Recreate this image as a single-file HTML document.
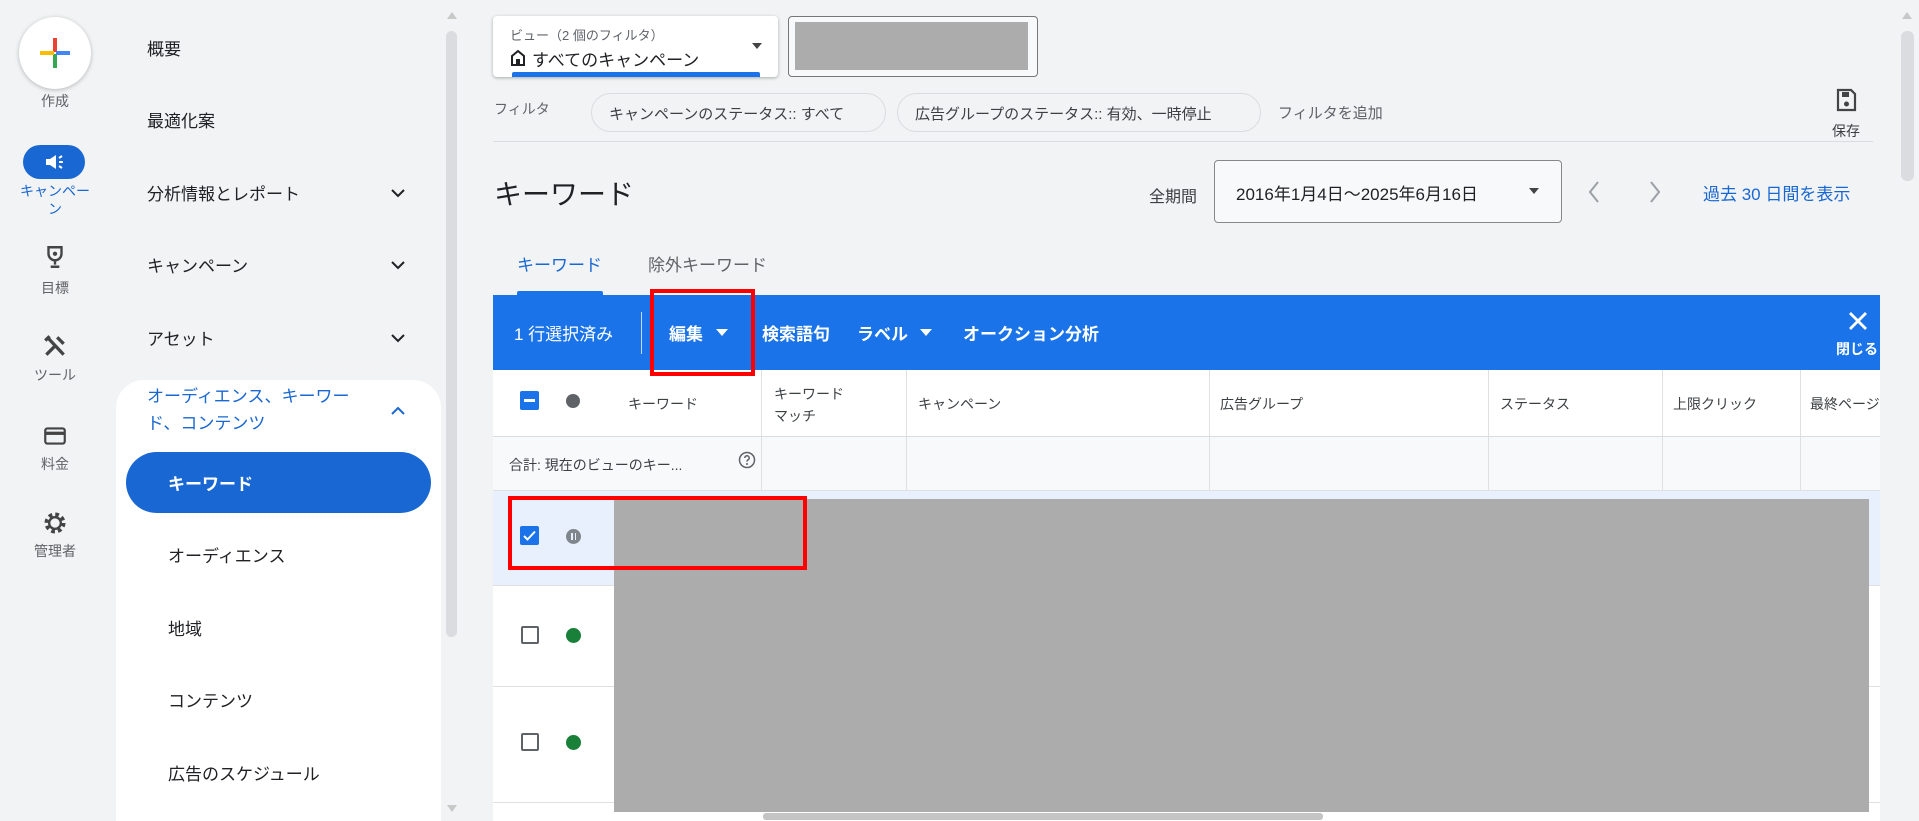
<!DOCTYPE html>
<html><head><meta charset="utf-8"><style>
*{margin:0;padding:0;box-sizing:border-box}
body{width:1919px;height:821px;overflow:hidden;background:#f1f3f4;font-family:"Liberation Sans","Noto Sans CJK JP",sans-serif;color:#202124;position:relative}
.a{position:absolute;white-space:nowrap}
.rl{font-size:14px;color:#5f6368;text-align:center;width:110px;left:0}
.nav{font-size:17px;color:#202124;left:147px}
.chev{left:388px;width:20px;height:20px}
.th{font-size:14px;color:#3c4043;top:394px}
.vl{position:absolute;width:1px;background:#e0e0e0}
.hl{position:absolute;height:1px;background:#e0e0e0}
</style></head><body>
<div class="a" style="left:19px;top:17px;width:72px;height:72px;border-radius:50%;background:#fff;box-shadow:0 1px 4px rgba(0,0,0,.25)"></div>
<div class="a" style="left:53px;top:38px;width:4px;height:14px;background:#ea4335"></div>
<div class="a" style="left:53px;top:54px;width:4px;height:14px;background:#34a853"></div>
<div class="a" style="left:40px;top:51px;width:14px;height:4px;background:#fbbc04"></div>
<div class="a" style="left:56px;top:51px;width:14px;height:4px;background:#4285f4"></div>
<div class="a rl" style="top:91px">作成</div>
<div class="a" style="left:23px;top:145px;width:62px;height:34px;border-radius:17px;background:#1967d2"></div>
<svg class="a" style="left:42px;top:150px" width="26" height="24" viewBox="0 0 24 24"><path d="M3 9h4l6-4v14l-6-4H3z" fill="#fff"/><path d="M16 8l3-2M16 12h4M16 16l3 2" stroke="#fff" stroke-width="2"/></svg>
<div class="a rl" style="top:182px;color:#1967d2;line-height:18px;font-size:14px">キャンペー<br>ン</div>
<svg class="a" style="left:42px;top:244px" width="26" height="26" viewBox="0 0 24 24"><path d="M6 3h12v6a6 6 0 0 1-12 0zM12 15v4M8 21h8" fill="none" stroke="#444" stroke-width="2.2"/><circle cx="12" cy="9" r="2" fill="#444"/></svg>
<div class="a rl" style="top:278px">目標</div>
<svg class="a" style="left:42px;top:333px" width="26" height="26" viewBox="0 0 24 24"><path d="M4 20l9-9M14 4l6 6M5 4l15 16M3 7l4-4" stroke="#444" stroke-width="3"/></svg>
<div class="a rl" style="top:365px">ツール</div>
<svg class="a" style="left:42px;top:423px" width="26" height="26" viewBox="0 0 24 24"><rect x="3" y="5" width="18" height="14" rx="2" fill="none" stroke="#444" stroke-width="2"/><rect x="3" y="8" width="18" height="3" fill="#444"/></svg>
<div class="a rl" style="top:454px">料金</div>
<svg class="a" style="left:41px;top:509px" width="28" height="28" viewBox="0 0 24 24"><circle cx="12" cy="12" r="7" fill="none" stroke="#444" stroke-width="4" stroke-dasharray="3 2.5"/><circle cx="12" cy="12" r="5" fill="none" stroke="#444" stroke-width="2"/></svg>
<div class="a rl" style="top:541px">管理者</div>
<div class="a nav" style="top:35px">概要</div>
<div class="a nav" style="top:107px">最適化案</div>
<div class="a nav" style="top:180px">分析情報とレポート</div>
<div class="a nav" style="top:252px">キャンペーン</div>
<div class="a nav" style="top:325px">アセット</div>
<svg class="a chev" style="top:183px" viewBox="0 0 20 20"><path d="M4 7l6 6 6-6" fill="none" stroke="#202124" stroke-width="2"/></svg>
<svg class="a chev" style="top:255px" viewBox="0 0 20 20"><path d="M4 7l6 6 6-6" fill="none" stroke="#202124" stroke-width="2"/></svg>
<svg class="a chev" style="top:328px" viewBox="0 0 20 20"><path d="M4 7l6 6 6-6" fill="none" stroke="#202124" stroke-width="2"/></svg>
<div class="a" style="left:116px;top:380px;width:325px;height:441px;background:#fff;border-radius:28px 28px 0 0"></div>
<div class="a nav" style="top:383px;color:#1967d2;line-height:27px">オーディエンス、キーワー<br>ド、コンテンツ</div>
<svg class="a chev" style="top:401px" viewBox="0 0 20 20"><path d="M4 13l6-6 6 6" fill="none" stroke="#1967d2" stroke-width="2"/></svg>
<div class="a" style="left:126px;top:452px;width:305px;height:61px;border-radius:31px;background:#1967d2"></div>
<div class="a nav" style="left:168px;top:470px;color:#fff;font-weight:bold">キーワード</div>
<div class="a nav" style="left:168px;top:542px">オーディエンス</div>
<div class="a nav" style="left:168px;top:615px">地域</div>
<div class="a nav" style="left:168px;top:687px">コンテンツ</div>
<div class="a nav" style="left:168px;top:760px">広告のスケジュール</div>
<div class="a" style="left:441px;top:0;width:20px;height:821px;background:#f1f3f4"></div>
<div class="a" style="left:446px;top:31px;width:11px;height:606px;border-radius:6px;background:#dadce0"></div>
<div class="a" style="left:447px;top:12px;width:0;height:0;border:5px solid transparent;border-bottom:7px solid #c8c8c8;border-top:0"></div>
<div class="a" style="left:447px;top:805px;width:0;height:0;border:5px solid transparent;border-top:7px solid #c8c8c8;border-bottom:0"></div>
<div class="a" style="left:493px;top:16px;width:285px;height:61px;background:#fff;border-radius:4px;box-shadow:0 1px 3px rgba(0,0,0,.3)"></div>
<div class="a" style="left:510px;top:25px;font-size:13px;color:#5f6368">ビュー（2 個のフィルタ）</div>
<svg class="a" style="left:510px;top:48px" width="16" height="18" viewBox="0 0 16 18"><path d="M2 8l6-5 6 5v9H2z" fill="none" stroke="#202124" stroke-width="2"/><rect x="6" y="11" width="4" height="6" fill="#202124"/></svg>
<div class="a" style="left:532px;top:46px;font-size:17px">すべてのキャンペーン</div>
<div class="a" style="left:752px;top:43px;border:5px solid transparent;border-top:6px solid #444;border-bottom:0"></div>
<div class="a" style="left:512px;top:72px;width:248px;height:5px;background:#1a73e8;border-radius:2px 2px 0 0"></div>
<div class="a" style="left:788px;top:16px;width:250px;height:61px;background:#f8f9fa;border:1px solid #777;border-radius:4px"></div>
<div class="a" style="left:795px;top:22px;width:233px;height:48px;background:#acacac"></div>
<div class="a" style="left:494px;top:99px;font-size:14px;color:#5f6368">フィルタ</div>
<div class="a" style="left:591px;top:93px;width:295px;height:39px;border:1px solid #dadce0;border-radius:20px;font-size:15px;color:#3c4043;padding:9px 0 0 17px">キャンペーンのステータス:: すべて</div>
<div class="a" style="left:897px;top:93px;width:364px;height:39px;border:1px solid #dadce0;border-radius:20px;font-size:15px;color:#3c4043;padding:9px 0 0 17px">広告グループのステータス:: 有効、一時停止</div>
<div class="a" style="left:1278px;top:102px;font-size:15px;color:#5f6368">フィルタを追加</div>
<svg class="a" style="left:1834px;top:87px" width="24" height="26" viewBox="0 0 24 26"><path d="M4 3h13l4 4v16H4z" fill="none" stroke="#444" stroke-width="2.2"/><rect x="8" y="5" width="7" height="5" fill="#444"/><circle cx="12.5" cy="17" r="2.5" fill="#444"/></svg>
<div class="a" style="left:1832px;top:121px;font-size:14px;color:#3c4043">保存</div>
<div class="hl" style="left:493px;top:141px;width:1380px;background:#dadce0"></div>
<div class="a" style="left:494px;top:173px;font-size:28px">キーワード</div>
<div class="a" style="left:1149px;top:183px;font-size:16px;color:#3c4043">全期間</div>
<div class="a" style="left:1214px;top:160px;width:348px;height:63px;border:1px solid #888;border-radius:4px;background:#f8f9fa"></div>
<div class="a" style="left:1236px;top:180px;font-size:17px">2016年1月4日〜2025年6月16日</div>
<div class="a" style="left:1529px;top:188px;border:5px solid transparent;border-top:6px solid #444;border-bottom:0"></div>
<svg class="a" style="left:1585px;top:179px" width="18" height="26" viewBox="0 0 18 26"><path d="M13 3L5 13l8 10" fill="none" stroke="#9aa0a6" stroke-width="2"/></svg>
<svg class="a" style="left:1646px;top:179px" width="18" height="26" viewBox="0 0 18 26"><path d="M5 3l8 10-8 10" fill="none" stroke="#9aa0a6" stroke-width="2"/></svg>
<div class="a" style="left:1703px;top:180px;font-size:17px;color:#1967d2">過去 30 日間を表示</div>
<div class="a" style="left:517px;top:251px;font-size:17px;color:#1967d2">キーワード</div>
<div class="a" style="left:517px;top:291px;width:86px;height:4px;background:#1a73e8;border-radius:2px 2px 0 0"></div>
<div class="a" style="left:648px;top:251px;font-size:17px;color:#5f6368">除外キーワード</div>
<div class="a" style="left:493px;top:295px;width:1387px;height:526px;background:#fff"></div>
<div class="a" style="left:493px;top:295px;width:1387px;height:75px;background:#1a73e8"></div>
<div class="a" style="left:514px;top:320px;font-size:17px;color:#fff">1 行選択済み</div>
<div class="a" style="left:641px;top:312px;width:1px;height:42px;background:#c6dafc"></div>
<div class="a" style="left:669px;top:320px;font-size:17px;color:#fff;font-weight:bold">編集</div>
<div class="a" style="left:716px;top:329px;border:6px solid transparent;border-top:7px solid #fff;border-bottom:0"></div>
<div class="a" style="left:762px;top:320px;font-size:17px;color:#fff;font-weight:bold">検索語句</div>
<div class="a" style="left:857px;top:320px;font-size:17px;color:#fff;font-weight:bold">ラベル</div>
<div class="a" style="left:920px;top:329px;border:6px solid transparent;border-top:7px solid #fff;border-bottom:0"></div>
<div class="a" style="left:963px;top:320px;font-size:17px;color:#fff;font-weight:bold">オークション分析</div>
<svg class="a" style="left:1847px;top:310px" width="22" height="22" viewBox="0 0 22 22"><path d="M3 3l16 16M19 3L3 19" stroke="#fff" stroke-width="2.8"/></svg>
<div class="a" style="left:1836px;top:339px;font-size:14px;color:#fff;font-weight:bold">閉じる</div>
<div class="a" style="left:650px;top:289px;width:105px;height:87px;border:4px solid #f00"></div>
<div class="a" style="left:520px;top:391px;width:19px;height:19px;background:#1a73e8;border-radius:2px"></div>
<div class="a" style="left:524px;top:399px;width:11px;height:2.5px;background:#fff"></div>
<div class="a" style="left:566px;top:394px;width:14px;height:14px;border-radius:50%;background:#5f6368"></div>
<div class="a th" style="left:628px">キーワード</div>
<div class="a th" style="left:774px;top:383px;line-height:22px">キーワード<br>マッチ</div>
<div class="a th" style="left:918px">キャンペーン</div>
<div class="a th" style="left:1220px">広告グループ</div>
<div class="a th" style="left:1500px">ステータス</div>
<div class="a th" style="left:1673px">上限クリック</div>
<div class="a th" style="left:1810px">最終ページ</div>
<div class="vl" style="left:761px;top:370px;height:120px"></div>
<div class="vl" style="left:906px;top:370px;height:120px"></div>
<div class="vl" style="left:1209px;top:370px;height:120px"></div>
<div class="vl" style="left:1488px;top:370px;height:120px"></div>
<div class="vl" style="left:1662px;top:370px;height:120px"></div>
<div class="vl" style="left:1800px;top:370px;height:120px"></div>
<div class="hl" style="left:493px;top:436px;width:1387px;background:#dadce0"></div>
<div class="a" style="left:493px;top:437px;width:1387px;height:53px;background:#f8f9fa"></div>
<div class="vl" style="left:761px;top:437px;height:53px"></div>
<div class="vl" style="left:906px;top:437px;height:53px"></div>
<div class="vl" style="left:1209px;top:437px;height:53px"></div>
<div class="vl" style="left:1488px;top:437px;height:53px"></div>
<div class="vl" style="left:1662px;top:437px;height:53px"></div>
<div class="vl" style="left:1800px;top:437px;height:53px"></div>
<div class="a" style="left:509px;top:455px;font-size:14px;color:#3c4043">合計: 現在のビューのキー...</div>
<svg class="a" style="left:738px;top:451px" width="18" height="18" viewBox="0 0 18 18"><circle cx="9" cy="9" r="7.5" fill="none" stroke="#5f6368" stroke-width="1.5"/><path d="M6.8 7a2.2 2.2 0 1 1 3 2c-.7.4-.8.8-.8 1.6" fill="none" stroke="#5f6368" stroke-width="1.5"/><circle cx="9" cy="13" r="1" fill="#5f6368"/></svg>
<div class="hl" style="left:493px;top:490px;width:1387px"></div>
<div class="a" style="left:493px;top:491px;width:1387px;height:94px;background:#e8f0fe"></div>
<div class="a" style="left:520px;top:526px;width:19px;height:19px;background:#1a73e8;border-radius:2px"></div>
<svg class="a" style="left:521px;top:527px" width="17" height="17" viewBox="0 0 17 17"><path d="M3 9l3.5 3.5L14 4.5" fill="none" stroke="#fff" stroke-width="2"/></svg>
<div class="a" style="left:566px;top:529px;width:15px;height:15px;border-radius:50%;background:#80868b"></div>
<div class="a" style="left:571px;top:533px;width:1.5px;height:7px;background:#e8f0fe"></div>
<div class="a" style="left:574.5px;top:533px;width:1.5px;height:7px;background:#e8f0fe"></div>
<div class="hl" style="left:493px;top:585px;width:1387px"></div>
<div class="a" style="left:521px;top:626px;width:18px;height:18px;border:2px solid #5f6368;border-radius:2px"></div>
<div class="a" style="left:566px;top:628px;width:15px;height:15px;border-radius:50%;background:#188038"></div>
<div class="hl" style="left:493px;top:686px;width:1387px"></div>
<div class="a" style="left:521px;top:733px;width:18px;height:18px;border:2px solid #5f6368;border-radius:2px"></div>
<div class="a" style="left:566px;top:735px;width:15px;height:15px;border-radius:50%;background:#188038"></div>
<div class="hl" style="left:493px;top:802px;width:1387px"></div>
<div class="a" style="left:614px;top:499px;width:1255px;height:313px;background:#acacac"></div>
<div class="a" style="left:508px;top:496px;width:299px;height:74px;border:4px solid #f00"></div>
<div class="a" style="left:763px;top:813px;width:560px;height:7px;background:#c4c4c4;border-radius:3px"></div>
<div class="a" style="left:1880px;top:0;width:39px;height:821px;background:#f1f3f4"></div>
<div class="a" style="left:1901px;top:31px;width:13px;height:150px;border-radius:6px;background:#dadce0"></div>
<div class="a" style="left:1902px;top:12px;border:5px solid transparent;border-bottom:7px solid #c8c8c8;border-top:0"></div>
</body></html>
